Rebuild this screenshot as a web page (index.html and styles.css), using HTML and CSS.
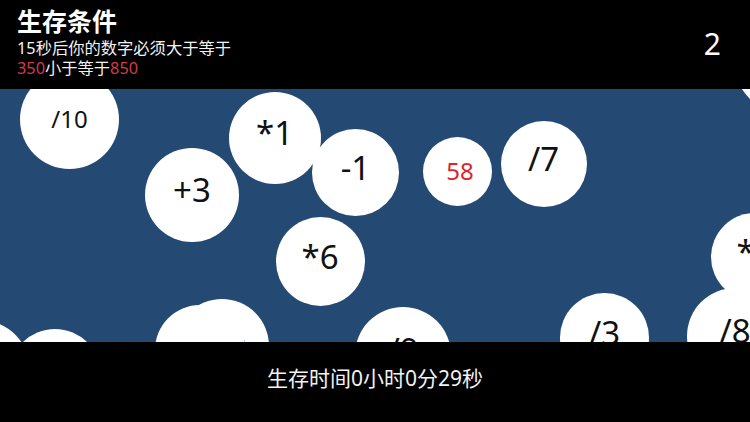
FILE: index.html
```html
<!DOCTYPE html>
<html lang="zh-CN">
<head>
<meta charset="utf-8">
<title>生存条件</title>
<link rel="stylesheet" href="styles.css">
</head>
<body>
<div class="app">
  <header class="top">
    <div class="info">
      <h1 class="title">生存条件</h1>
      <p class="rule">15秒后你的数字必须大于等于</p>
      <p class="rule"><span class="red">350</span>小于等于<span class="red">850</span></p>
    </div>
    <div class="count">2</div>
  </header>
  <main class="field">
    <div class="ball c" style="--x:-20px;--y:281px;--r:50px"></div>
    <div class="ball c" style="--x:55px;--y:286px;--r:46px"></div>
    <div class="ball big low" style="--x:222px;--y:257px;--r:47px"><span>/5</span></div>
    <div class="ball big lower" style="--x:200px;--y:261px;--r:45px"><span>/7</span></div>
    <div class="ball big" style="--x:403px;--y:266px;--r:48px"><span>/9</span></div>
    <div class="ball big" style="--x:604.5px;--y:248.5px;--r:44.5px"><span>/3</span></div>
    <div class="ball big" style="--x:755px;--y:168px;--r:44px"><span>*8</span></div>
    <div class="ball big" style="--x:735px;--y:247px;--r:48px"><span>/8</span></div>
    <div class="ball" style="--x:800px;--y:-39px;--r:70px"></div>
    <div class="ball mid" style="--x:69.5px;--y:30.5px;--r:49.5px"><span>/10</span></div>
    <div class="ball big" style="--x:274.5px;--y:49px;--r:46px"><span>*1</span></div>
    <div class="ball big" style="--x:192px;--y:106px;--r:47px"><span>+3</span></div>
    <div class="ball big" style="--x:355.5px;--y:83.5px;--r:43.5px"><span>-1</span></div>
    <div class="ball mid own" style="--x:457px;--y:82.5px;--r:34.5px"><span>58</span></div>
    <div class="ball big" style="--x:543.5px;--y:75px;--r:43px"><span>/7</span></div>
    <div class="ball big" style="--x:320px;--y:172.5px;--r:44.5px"><span>*6</span></div>
  </main>
  <footer class="bottom">生存时间0小时0分29秒</footer>
</div>
</body>
</html>
```
FILE: styles.css
```css
html, body {
  margin: 0;
  padding: 0;
  background: #000;
}
body {
  font-family: "Noto Sans", "Noto Sans CJK SC", sans-serif;
  color: #fff;
}
.app {
  width: 750px;
  height: 422px;
  display: flex;
  flex-direction: column;
  overflow: hidden;
}
.top {
  height: 89px;
  flex: none;
  background: #000;
  display: flex;
  justify-content: space-between;
  align-items: flex-start;
  padding: 2px 29px 0 17px;
  box-sizing: border-box;
}
.info {
  display: flex;
  flex-direction: column;
}
.title {
  margin: 0;
  font-family: "Noto Sans CJK SC", sans-serif;
  font-weight: 700;
  font-size: 25px;
  line-height: 37px;
  color: #fff;
}
.rule {
  margin: 0;
  font-family: "Noto Sans", "Noto Sans CJK SC", sans-serif;
  font-size: 16.3px;
  line-height: 19.5px;
  color: #f2f2f2;
}
.red {
  color: #d23c48;
}
.count {
  font-size: 30px;
  line-height: 30px;
  margin-top: 27px;
  color: #fff;
}
.field {
  position: relative;
  height: 253px;
  flex: none;
  background: #244a74;
  overflow: hidden;
}
.ball {
  position: absolute;
  left: calc(var(--x) - var(--r));
  top: calc(var(--y) - var(--r));
  width: calc(var(--r) * 2);
  height: calc(var(--r) * 2);
  border-radius: 50%;
  background: #fff;
  display: flex;
  align-items: center;
  justify-content: center;
  box-sizing: border-box;
  color: #111;
  line-height: 1;
}
.ball.big {
  font-size: 33px;
  padding-bottom: 11px;
}
.ball.low {
  padding-bottom: 0;
  padding-top: 10px;
  padding-left: 20px;
}
.ball.lower {
  padding-bottom: 0;
  padding-top: 30px;
  padding-left: 10px;
}
.ball.mid {
  font-size: 24px;
  padding-bottom: 2px;
}
.ball.own {
  color: #d9262b;
  padding-left: 6px;
}
.bottom {
  height: 80px;
  flex: none;
  box-sizing: border-box;
  padding-top: 22px;
  text-align: center;
  font-family: "Noto Sans", "Noto Sans CJK SC", sans-serif;
  font-size: 21px;
  line-height: 28px;
  color: #f2f2f2;
}
```
